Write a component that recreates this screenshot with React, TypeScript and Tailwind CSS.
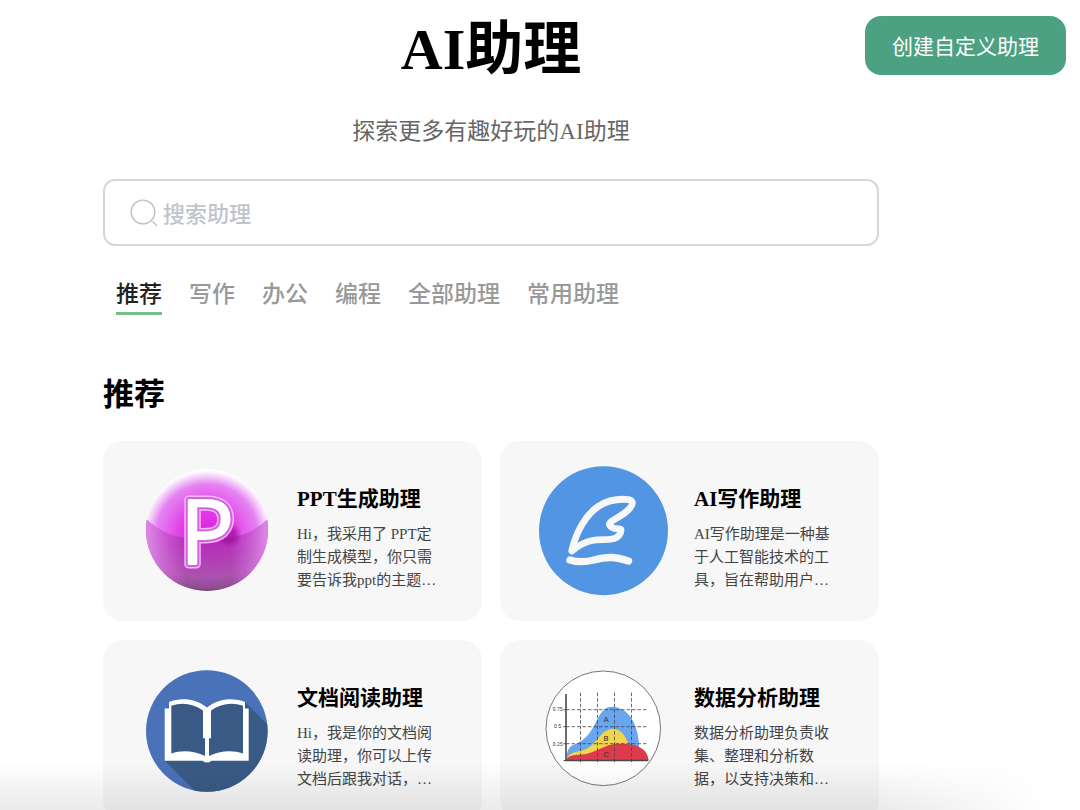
import { useState } from "react";
import type { ReactNode } from "react";
import clsx from "clsx";

function PptIcon() {
    return (
        <svg viewBox="0 0 130 130" className="size-full" aria-hidden="true">
            <defs>
                <radialGradient id="ball" cx="0.5" cy="0.53" r="0.5">
                    <stop offset="0" stopColor="#dd1fdd" />
                    <stop offset="0.4" stopColor="#e13de6" />
                    <stop offset="0.78" stopColor="#e682f3" />
                    <stop offset="0.97" stopColor="#fdf6fe" />
                    <stop offset="1" stopColor="#fff" />
                </radialGradient>
                <radialGradient id="ballLow" cx="0.5" cy="0.05" r="0.9">
                    <stop offset="0" stopColor="#b515b8" />
                    <stop offset="0.45" stopColor="#b534b9" />
                    <stop offset="0.8" stopColor="#ac52b0" />
                    <stop offset="0.95" stopColor="#8b4f8e" />
                    <stop offset="1" stopColor="#5d4a5e" />
                </radialGradient>
                <linearGradient id="ballSides" x1="0" x2="1" y1="0" y2="0">
                    <stop offset="0.05" stopColor="#e795f2" />
                    <stop offset="0.35" stopColor="#dc70e6" stopOpacity="0" />
                    <stop offset="0.68" stopColor="#dc70e6" stopOpacity="0" />
                    <stop offset="0.95" stopColor="#e795f2" />
                </linearGradient>
                <radialGradient id="ballSpot">
                    <stop offset="0.4" stopColor="#960f9b" />
                    <stop offset="1" stopColor="#960f9b" stopOpacity="0" />
                </radialGradient>
                <clipPath id="ballClip">
                    <circle cx="65" cy="64" r="61" />
                </clipPath>
            </defs>
            <g clipPath="url(#ballClip)">
                <rect width="130" height="130" fill="url(#ball)" />
                <path d="M0 48Q20 74 65 74T130 48V130H0Z" fill="url(#ballLow)" />
                <path d="M0 48Q20 74 65 74T130 48V130H0Z" fill="url(#ballSides)" opacity="0.8" />
                <circle cx="87" cy="69" r="13" fill="url(#ballSpot)" opacity="0.7" />
            </g>
            <g fontFamily="Open Sans, sans-serif" fontWeight="400" fontSize="90" strokeLinejoin="round">
                <text x="38" y="98" fill="none" stroke="#f0b9f5" strokeWidth="9">P</text>
                <text x="38" y="98" fill="none" stroke="#d65fde" strokeWidth="6">P</text>
                <text x="38" y="98" fill="#fff" stroke="#fff" strokeWidth="2">P</text>
            </g>
        </svg>
    );
}

function WritingIcon() {
    return (
        <svg viewBox="0 0 130 130" className="size-full" aria-hidden="true">
            <circle cx="64.5" cy="64.7" r="64.5" fill="#5195e3" />
            <g fill="none" stroke="#f7f7f7" strokeWidth="6.8" strokeLinecap="round" strokeLinejoin="round">
                <path d="M32.7 85C37 66 47 48 60 40C69 34 79 33 87 33.3C94 33.4 95 37 91 42C85 49 79 51 73 55C69 58 70 60 74 61.8C77 63 80 62.5 82 63.5C82 68 79 72 73 73C67 74.3 61 72.8 53 74.5C45 76 39 80 32.7 85Z" />
                <path d="M31 94C38 96.2 47 96 55 94C68 90.5 76 90.5 89.5 95" strokeWidth="7.4" />
            </g>
        </svg>
    );
}

function BookIcon() {
    return (
        <svg viewBox="0 0 130 130" className="size-full" aria-hidden="true">
            <defs>
                <clipPath id="bookClip">
                    <circle cx="64.8" cy="66" r="60.8" />
                </clipPath>
            </defs>
            <g clipPath="url(#bookClip)">
                <rect width="130" height="130" fill="#4a72b8" />
                <path d="M103 37L130 64V130H57L22.7 95.7Z" fill="#3a5a86" />
            </g>
            <path
                d="M22.7 43.5H27V37C38 32.5 53 33 65 42.5C77 33 92 32.5 103 37V43.5H106.7V95.7H69.5Q65 99.5 60.5 95.7H22.7Z"
                fill="#fff"
            />
            <g fill="#3a5a86">
                <path d="M29.3 40.8C40 37 51 38.5 61 45.5V73.3H63V91C53 86 40 84.7 29.3 88.5Z" />
                <path d="M101 40.8C90 37 79 38.5 69 45.5V73.3H67V91C77 86 90 84.7 101 88.5Z" />
            </g>
        </svg>
    );
}

function ChartIcon() {
    return (
        <svg viewBox="0 0 130 130" className="size-full" aria-hidden="true">
            <circle cx="64.3" cy="63.3" r="57.3" fill="#fff" stroke="#777" />
            <path d="M27.5 95C27.5 88 29 82 34 80C48 75 53 65 58 55C62 46 67 41.7 73 41.7C90 42 100 60 100.3 84V95Z" fill="#68a7f0" />
            <path d="M27.5 95C29 88 36 87 43 85.5C52 83 56 77 61 71C66 65.5 70 64 74 64C82 64 87 71 90 81V95Z" fill="#f3d54b" />
            <path d="M27.5 95C29 90 36 90 43 89.5C58 88 64 79 80 78.7C96 78 109 83 109.5 95Z" fill="#db3b4b" />
            <g stroke="#444" strokeDasharray="3.5 2" opacity="0.8">
                <path d="M41.5 27.7V99.5M58.5 27.7V99.5M75.5 27.7V99.5M92.5 27.7V99.5" />
                <path d="M27 44.7H108.5M27 61.7H108.5M27 78.7H108.5" />
            </g>
            <path d="M27 29V95.5H109.5" fill="none" stroke="#4a4a4a" strokeWidth="1.6" />
            <path d="M24.5 44.7H27M24.5 61.7H27M24.5 78.7H27M24.5 95.5H27" stroke="#4a4a4a" />
            <g fontFamily="Roboto, sans-serif" fill="#333">
                <g fontSize="5" textAnchor="end">
                    <text x="23.5" y="46">0.75</text>
                    <text x="22" y="63">0.5</text>
                    <text x="23.5" y="80.5">0.25</text>
                </g>
                <g fontSize="8" textAnchor="middle">
                    <text x="67" y="57">A</text>
                    <text x="67" y="75.5">B</text>
                    <text x="67" y="91.5">C</text>
                </g>
            </g>
        </svg>
    );
}

const tabs = ["推荐", "写作", "办公", "编程", "全部助理", "常用助理"];

const assistants: { name: string; desc: string; icon: ReactNode }[] = [
    {
        name: "PPT生成助理",
        desc: "Hi，我采用了 PPT定制生成模型，你只需要告诉我ppt的主题…",
        icon: <PptIcon />,
    },
    {
        name: "AI写作助理",
        desc: "AI写作助理是一种基于人工智能技术的工具，旨在帮助用户…",
        icon: <WritingIcon />,
    },
    {
        name: "文档阅读助理",
        desc: "Hi，我是你的文档阅读助理，你可以上传文档后跟我对话，…",
        icon: <BookIcon />,
    },
    {
        name: "数据分析助理",
        desc: "数据分析助理负责收集、整理和分析数据，以支持决策和…",
        icon: <ChartIcon />,
    },
];

export default function App() {
    const [active, setActive] = useState("推荐");
    const [keyword, setKeyword] = useState("");

    return (
        <div
            lang="zh-CN"
            className="relative h-screen overflow-hidden bg-white pr-[201px] pl-[103px] font-['Liberation_Serif','Noto_Sans_CJK_SC',serif] text-black"
        >
            <button
                type="button"
                className="absolute top-4 right-[14px] h-[59px] rounded-2xl bg-[#4ba181] px-[27px] pt-1 text-[21px] text-white"
            >
                创建自定义助理
            </button>

            <header className="flex flex-col items-center pt-[10px] text-center">
                <h1 className="text-[58px] leading-20 font-bold">AI助理</h1>
                <p className="mt-6 text-[23px] leading-9 text-[#666]">探索更多有趣好玩的AI助理</p>
            </header>

            <main>
                <label className="mt-[29px] flex h-[67px] items-center gap-1 rounded-xl border-2 border-[#d6d6de] px-6">
                    <svg viewBox="0 0 30 30" className="size-[30px] shrink-0" fill="none" stroke="#c0c4cc" strokeWidth="1.6" aria-hidden="true">
                        <circle cx="14" cy="14" r="11.8" />
                        <path d="M23.5 23.5L28 28" />
                    </svg>
                    <input
                        type="text"
                        aria-label="搜索助理"
                        placeholder="搜索助理"
                        value={keyword}
                        onChange={(e) => setKeyword(e.target.value)}
                        className="w-full font-['Noto_Sans_CJK_SC',sans-serif] text-[22px] font-medium outline-none placeholder:text-[#c0c4cc]"
                    />
                </label>

                <nav className="mt-[31px] flex gap-[27px] px-[13px]">
                    {tabs.map((tab) => (
                        <button
                            key={tab}
                            type="button"
                            onClick={() => setActive(tab)}
                            className={clsx(
                                "border-b-[3px] text-[23px] leading-[35px] font-medium",
                                active === tab ? "border-[#73bf8b] text-[#222]" : "border-transparent text-[#999]"
                            )}
                        >
                            {tab}
                        </button>
                    ))}
                </nav>

                <h2 className="mt-14 text-[31px] leading-12 font-bold">推荐</h2>

                <div className="mt-[22px] grid grid-cols-2 gap-x-[18px] gap-y-[19px]">
                    {assistants.map((item) => (
                        <a
                            key={item.name}
                            href="#"
                            className="flex items-start gap-[25px] rounded-[20px] bg-[#f7f7f7] py-[25px] pr-9 pl-[39px]"
                        >
                            <div className="size-[130px] shrink-0">{item.icon}</div>
                            <div className="max-w-[145px] pt-[19px]">
                                <h3 className="text-[21px] leading-7 font-bold">{item.name}</h3>
                                <p className="mt-[10px] line-clamp-3 text-[15px] leading-[23px] text-[#444]">{item.desc}</p>
                            </div>
                        </a>
                    ))}
                </div>
            </main>

            <div className="pointer-events-none absolute inset-x-0 bottom-0 h-12 bg-gradient-to-b from-transparent to-black/8 [mask-image:linear-gradient(to_right,black_82%,transparent_97%)]" />
        </div>
    );
}
